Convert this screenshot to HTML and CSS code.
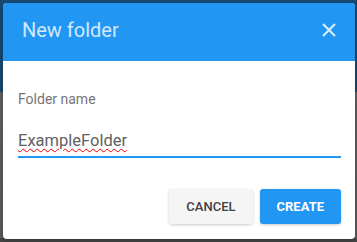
FILE: index.html
```html
<!DOCTYPE html>
<html lang="en">
<head>
    <meta charset="UTF-8" />
    <title>New folder</title>
    <link rel="stylesheet" href="styles.css">
</head>
<body>
    <div class="dialog">
        <div class="dialog-head">
            <span class="dialog-title">New folder</span>
            <svg class="close" width="14" height="14" viewBox="0 0 14 14">
                <path d="M1 1L13 13M13 1L1 13" stroke="currentColor" stroke-width="2" fill="none" />
            </svg>
        </div>
        <div class="dialog-body">
            <div class="field-label">Folder name</div>
            <div class="field-input"><span class="misspelt">ExampleFolder</span></div>
            <div class="actions">
                <button class="btn btn-cancel">CANCEL</button>
                <button class="btn btn-create">CREATE</button>
            </div>
        </div>
    </div>
</body>
</html>
```

FILE: styles.css
```css
html,body{margin:0;padding:0;}
body{width:357px;height:242px;overflow:hidden;font-family:Roboto,"Liberation Sans",sans-serif;background:linear-gradient(#174a73 0,#174a73 92px,#626262 92px,#5c5c5c 238px,#474747 238px);}
.dialog{margin:3px;width:352px;background:#fff;border-radius:4px;overflow:hidden;box-shadow:0 2px 6px rgba(0,0,0,.3);}
.dialog-head{height:58px;box-sizing:border-box;padding:0 19px 4px 19px;background:#2196f3;display:flex;align-items:center;justify-content:space-between;}
.dialog-title{font-size:20px;color:rgba(255,255,255,.8);}
.close{color:rgba(255,255,255,.85);display:block;}
.dialog-body{padding:28px 14px 15px 15px;}
.field-label{font-size:14px;line-height:20px;color:#757575;}
.field-input{margin-top:20px;font-size:16.5px;line-height:23px;color:#616161;padding-bottom:4px;border-bottom:2px solid #2196f3;}
.misspelt{text-decoration:underline wavy #e00;text-decoration-thickness:1px;text-underline-offset:2px;}
.actions{margin-top:31px;display:flex;justify-content:flex-end;gap:7px;}
.btn{height:35px;padding:0 17px;border:0;border-radius:3px;font-family:Roboto,"Liberation Sans",sans-serif;font-size:13px;font-weight:500;box-shadow:0 1px 3px rgba(0,0,0,.2);}
.btn-cancel{background:#f5f5f5;color:#424242;}
.btn-create{background:#2196f3;color:#fff;font-weight:700;}
```
